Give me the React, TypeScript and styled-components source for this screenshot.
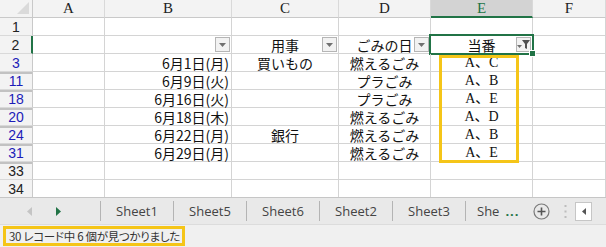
import React from 'react';
import styled, { createGlobalStyle, css } from 'styled-components';

const GlobalStyle = createGlobalStyle`
  html, body {
    margin: 0;
    padding: 0;
    background: #ffffff;
  }
  body {
    width: 606px;
    height: 247px;
    overflow: hidden;
    font-family: "Noto Sans CJK JP", "Liberation Sans", sans-serif;
  }
`;

const GRID = '#d4d4d4';
const GREEN = '#217346';
const JP = `"Noto Sans CJK JP", sans-serif`;
const SERIF = `"Liberation Serif", "Noto Sans CJK JP", serif`;

const Window = styled.div`
  display: flex;
  flex-direction: column;
  width: 606px;
  height: 247px;
`;

const SheetArea = styled.div`
  position: relative;
  height: 197px;
  overflow: hidden;
`;

const Grid = styled.div`
  display: grid;
  grid-template-columns: 33px 72px 127px 107px 92px 102px 1fr;
  grid-auto-rows: 18px;
`;

const Corner = styled.div`
  position: relative;
  background: #f3f3f3;
  border-right: 1px solid #c9c9c9;
  border-bottom: 1px solid #c9c9c9;
  &::after {
    content: '';
    position: absolute;
    right: 3px;
    bottom: 3px;
    border-left: 12px solid transparent;
    border-bottom: 12px solid #dadada;
  }
`;

const ColHead = styled.div<{ $active?: boolean }>`
  display: flex;
  align-items: center;
  justify-content: center;
  background: #f3f3f3;
  border-right: 1px solid #d9d9d9;
  border-bottom: 1px solid #c9c9c9;
  font-family: ${SERIF};
  font-size: 15px;
  color: #222;
  ${(p) =>
    p.$active &&
    css`
      background: #d3d3d3;
      color: ${GREEN};
      border-bottom: 2px solid ${GREEN};
    `}
`;

const RowHead = styled.div<{ $filtered?: boolean; $afterHidden?: boolean; $active?: boolean }>`
  display: flex;
  align-items: center;
  justify-content: center;
  background: #f3f3f3;
  border-right: 1px solid #c9c9c9;
  border-bottom: 1px solid #d9d9d9;
  font-family: "Liberation Sans", sans-serif;
  font-size: 14px;
  line-height: 1;
  color: ${(p) => (p.$filtered ? '#1c1cb8' : '#222')};
  ${(p) =>
    p.$afterHidden &&
    css`
      box-shadow: inset 0 2px 0 #c2c2c2;
    `}
  ${(p) =>
    p.$active &&
    css`
      border-right: 2px solid ${GREEN};
    `}
`;

const Cell = styled.div<{ $align?: 'left' | 'center' | 'right'; $serif?: boolean }>`
  position: relative;
  display: flex;
  align-items: center;
  justify-content: ${(p) =>
    p.$align === 'right' ? 'flex-end' : p.$align === 'center' ? 'center' : 'flex-start'};
  padding: 0 2px;
  border-right: 1px solid ${GRID};
  border-bottom: 1px solid ${GRID};
  font-family: ${(p) => (p.$serif ? SERIF : JP)};
  font-size: 14px;
  line-height: 1;
  color: #111;
  white-space: nowrap;
`;

const HeaderCell = styled(Cell)<{ $selected?: boolean }>`
  justify-content: center;
  ${(p) =>
    p.$selected &&
    css`
      &::after {
        content: '';
        position: absolute;
        left: -2px;
        top: -2px;
        right: -2px;
        bottom: -2px;
        border: 2px solid ${GREEN};
        pointer-events: none;
      }
      &::before {
        content: '';
        position: absolute;
        right: -4px;
        bottom: -4px;
        width: 5px;
        height: 5px;
        background: ${GREEN};
        border: 1px solid #fff;
        z-index: 2;
      }
    `}
`;

const FilterButton = styled.span`
  position: absolute;
  right: 1px;
  top: 1px;
  width: 15px;
  height: 15px;
  box-sizing: border-box;
  display: flex;
  align-items: center;
  justify-content: center;
  background: #f2f2f2;
  border: 1px solid #b5b5b5;
`;

const Highlight = styled.div`
  position: absolute;
  left: 439px;
  top: 55px;
  width: 80px;
  height: 108px;
  box-sizing: border-box;
  border: 3px solid #f5c518;
  pointer-events: none;
`;

const TabBar = styled.div`
  display: flex;
  align-items: center;
  height: 28px;
  box-sizing: border-box;
  background: #e9e9e9;
  border-top: 1px solid #c6c6c6;
  border-bottom: 1px solid #dcdcdc;
  font-family: "Open Sans", "Noto Sans", sans-serif;
  font-size: 13px;
  color: #444;
`;

const Nav = styled.div`
  display: flex;
  align-items: center;
  width: 100px;
  padding-left: 27px;
  box-sizing: border-box;
  gap: 24px;
`;

const Tab = styled.div`
  display: flex;
  align-items: center;
  justify-content: center;
  width: 73px;
  height: 20px;
  border-left: 1px solid #b4b4b4;
  box-sizing: border-box;
`;

const LastTab = styled(Tab)`
  width: 62px;
  justify-content: flex-start;
  padding-left: 11px;
  overflow: hidden;
  gap: 6px;
`;

const More = styled.span`
  color: ${GREEN};
  font-weight: 700;
  letter-spacing: 1px;
`;

const TabTools = styled.div`
  display: flex;
  align-items: center;
  gap: 14px;
  margin-left: 6px;
`;

const ScrollButton = styled.div`
  display: flex;
  align-items: center;
  justify-content: center;
  width: 15px;
  height: 17px;
  background: #fff;
  border: 1px solid #c6c6c6;
  margin-left: 8px;
`;

const StatusBar = styled.div`
  display: flex;
  align-items: center;
  flex: 1;
  background: #f0f0f0;
  padding-left: 3px;
`;

const StatusText = styled.div`
  display: flex;
  align-items: center;
  height: 20px;
  box-sizing: border-box;
  padding: 0 2px 0 3px;
  border: 3px solid #f5c518;
  font-family: ${JP};
  font-size: 11.5px;
  letter-spacing: -0.3px;
  font-feature-settings: 'palt';
  color: #333;
  white-space: nowrap;
`;

const DownArrow = () => (
  <svg width="7" height="4" viewBox="0 0 7 4">
    <path d="M0 0h7L3.5 4z" fill="#707070" />
  </svg>
);

const FunnelArrow = () => (
  <svg width="13" height="11" viewBox="0 0 13 11">
    <path d="M0 6h5L2.5 9z" fill="#707070" />
    <path d="M5 1h8L10 5v5l-2-1V5z" fill="#505050" />
  </svg>
);

interface RowData {
  n: string;
  filtered?: boolean;
  afterHidden?: boolean;
  b?: string;
  c?: string;
  d?: string;
  e?: string;
}

const rows: RowData[] = [
  { n: '1' },
  { n: '3', filtered: true, b: '6月1日(月)', c: '買いもの', d: '燃えるごみ', e: 'A、C' },
  { n: '11', filtered: true, afterHidden: true, b: '6月9日(火)', d: 'プラごみ', e: 'A、B' },
  { n: '18', filtered: true, afterHidden: true, b: '6月16日(火)', d: 'プラごみ', e: 'A、E' },
  { n: '20', filtered: true, afterHidden: true, b: '6月18日(木)', d: '燃えるごみ', e: 'A、D' },
  { n: '24', filtered: true, afterHidden: true, b: '6月22日(月)', c: '銀行', d: '燃えるごみ', e: 'A、B' },
  { n: '31', filtered: true, afterHidden: true, b: '6月29日(月)', d: '燃えるごみ', e: 'A、E' },
  { n: '33', afterHidden: true },
  { n: '34' },
];

const columns = ['A', 'B', 'C', 'D', 'E', 'F'];
const sheets = ['Sheet1', 'Sheet5', 'Sheet6', 'Sheet2', 'Sheet3'];

function DataRow({ row }: { row: RowData }) {
  return (
    <>
      <RowHead $filtered={row.filtered} $afterHidden={row.afterHidden}>
        {row.n}
      </RowHead>
      <Cell />
      <Cell $align="right">{row.b}</Cell>
      <Cell $align="center">{row.c}</Cell>
      <Cell $align="center">{row.d}</Cell>
      <Cell $align="center" $serif>
        {row.e}
      </Cell>
      <Cell />
    </>
  );
}

export default function App() {
  const [first, ...rest] = rows;
  return (
    <Window>
      <GlobalStyle />
      <SheetArea>
        <Grid>
          <Corner />
          {columns.map((c) => (
            <ColHead key={c} $active={c === 'E'}>
              {c}
            </ColHead>
          ))}

          <DataRow row={first} />

          <RowHead $active>2</RowHead>
          <Cell />
          <HeaderCell>
            <FilterButton>
              <DownArrow />
            </FilterButton>
          </HeaderCell>
          <HeaderCell>
            用事
            <FilterButton>
              <DownArrow />
            </FilterButton>
          </HeaderCell>
          <HeaderCell>
            ごみの日
            <FilterButton>
              <DownArrow />
            </FilterButton>
          </HeaderCell>
          <HeaderCell $selected>
            当番
            <FilterButton>
              <FunnelArrow />
            </FilterButton>
          </HeaderCell>
          <Cell />

          {rest.map((r) => (
            <DataRow key={r.n} row={r} />
          ))}
        </Grid>
        <Highlight />
      </SheetArea>

      <TabBar>
        <Nav>
          <svg width="5" height="9" viewBox="0 0 5 9">
            <path d="M5 0v9L0 4.5z" fill="#c4c4c4" />
          </svg>
          <svg width="5" height="9" viewBox="0 0 5 9">
            <path d="M0 0v9L5 4.5z" fill={GREEN} />
          </svg>
        </Nav>
        {sheets.map((s) => (
          <Tab key={s}>{s}</Tab>
        ))}
        <LastTab>
          She<More>...</More>
        </LastTab>
        <TabTools>
          <svg width="17" height="17" viewBox="0 0 17 17">
            <circle cx="8.5" cy="8.5" r="7.5" fill="none" stroke="#7a7a7a" strokeWidth="1.2" />
            <path d="M8.5 4.5v8M4.5 8.5h8" stroke="#555" strokeWidth="1.6" />
          </svg>
          <svg width="3" height="13" viewBox="0 0 3 13">
            <rect x="0.5" y="0" width="2" height="2" fill="#bdbdbd" />
            <rect x="0.5" y="5.5" width="2" height="2" fill="#bdbdbd" />
            <rect x="0.5" y="11" width="2" height="2" fill="#bdbdbd" />
          </svg>
        </TabTools>
        <ScrollButton>
          <svg width="4" height="7" viewBox="0 0 4 7">
            <path d="M4 0v7L0 3.5z" fill="#555" />
          </svg>
        </ScrollButton>
      </TabBar>

      <StatusBar>
        <StatusText>30 レコード中 6 個が見つかりました</StatusText>
      </StatusBar>
    </Window>
  );
}
